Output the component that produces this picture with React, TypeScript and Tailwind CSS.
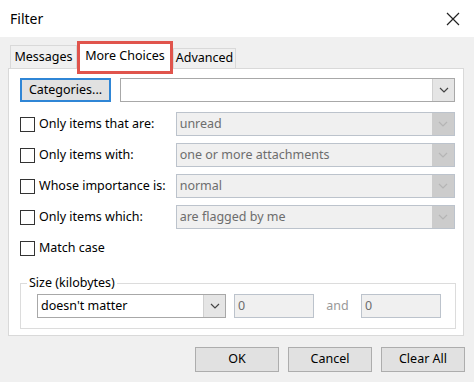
import React from 'react';

const font = { fontFamily: '"Noto Sans", "Open Sans", sans-serif' };

function Chevron({ light }: { light?: boolean }) {
  return (
    <svg width="10" height="6" viewBox="0 0 10 6" fill="none">
      <path d="M1 1l4 4 4-4" stroke={light ? '#b5b5b5' : '#444'} strokeWidth="1.2" />
    </svg>
  );
}

function Select({ value, disabled, className }: { value: string; disabled?: boolean; className: string }) {
  return (
    <div
      className={`flex h-[24px] items-stretch border ${
        disabled ? 'border-[#bcc3cc] bg-[#f0f0f0] text-[#6d6d6d]' : 'border-[#a8a8a8] bg-white text-black'
      } ${className}`}
    >
      <div className="flex flex-1 items-center overflow-hidden whitespace-nowrap pl-[3px]">{value}</div>
      <div
        className={`flex w-[22px] items-center justify-center ${
          disabled ? 'bg-[#cccccc]' : 'border-l border-[#d0d0d0] bg-[#e5e5e5]'
        }`}
      >
        <Chevron light={disabled} />
      </div>
    </div>
  );
}

function Checkbox() {
  return <div className="h-[15px] w-[15px] shrink-0 border border-[#333] bg-white" />;
}

const rows = [
  { label: 'Only items that are:', value: 'unread' },
  { label: 'Only items with:', value: 'one or more attachments' },
  { label: 'Whose importance is:', value: 'normal' },
  { label: 'Only items which:', value: 'are flagged by me' },
];

export default function App() {
  return (
    <div className="flex h-[382px] w-[474px] flex-col bg-[#f0f0f0] text-[12.5px] text-black" style={font}>
      <div className="flex h-[37px] shrink-0 items-center justify-between bg-white pl-[10px] pr-[14px]">
        <span className="text-[14px]">Filter</span>
        <svg width="14" height="14" viewBox="0 0 14 14">
          <path d="M1 1l12 12M13 1L1 13" stroke="#222" strokeWidth="1.2" />
        </svg>
      </div>

      <div className="flex h-[31px] items-end pl-[10px]">
        <div className="flex h-[23px] w-[67px] items-center justify-center border border-b-0 border-[#d9d9d9] bg-[#f0f0f0]">
          Messages
        </div>
        <div className="relative z-10 -mb-[6px] flex h-[33px] w-[96px] items-center justify-center border-[3px] border-[#e0544c] bg-white pb-[2px]">
          More Choices
        </div>
        <div className="flex h-[20px] w-[63px] items-center justify-center border border-b-0 border-[#d9d9d9] bg-[#f0f0f0]">
          Advanced
        </div>
      </div>

      <div className="mx-[8px] flex h-[268px] w-[456px] flex-col border border-[#d9d9d9] bg-white pl-[11px] pr-[8px] pt-[9px]">
        <div className="flex items-center gap-[9px]">
          <div className="flex h-[24px] w-[91px] items-center justify-center border-2 border-[#2f86d6] bg-[#e1e1e1]">
            Categories...
          </div>
          <Select value="" className="w-[335px]" />
        </div>

        <div className="mt-[10px] flex flex-col gap-[7px]">
          {rows.map((r) => (
            <div key={r.label} className="flex h-[24px] items-center">
              <Checkbox />
              <span className="ml-[4px] w-[137px] whitespace-nowrap">{r.label}</span>
              <Select value={r.value} disabled className="w-[280px]" />
            </div>
          ))}
          <div className="flex h-[24px] items-center">
            <Checkbox />
            <span className="ml-[4px]">Match case</span>
          </div>
        </div>

        <div className="relative mt-[23px] flex h-[46px] w-[436px] items-center border border-[#dcdcdc] pl-[16px]">
          <span className="absolute -top-[10px] left-[6px] bg-white px-[2px]">Size (kilobytes)</span>
          <Select value="doesn't matter" className="w-[189px]" />
          <div className="ml-[8px] flex h-[24px] w-[80px] items-center border border-[#bcc3cc] bg-[#f0f0f0] pl-[3px] text-[#6d6d6d]">
            0
          </div>
          <span className="w-[47px] text-center text-[#999]">and</span>
          <div className="flex h-[24px] w-[80px] items-center border border-[#bcc3cc] bg-[#f0f0f0] pl-[3px] text-[#6d6d6d]">
            0
          </div>
        </div>
      </div>

      <div className="mt-[11px] flex justify-end gap-[9px] pr-[9px]">
        {['OK', 'Cancel', 'Clear All'].map((b) => (
          <div key={b} className="flex h-[25px] w-[84px] items-center justify-center border border-[#adadad] bg-[#e1e1e1]">
            {b}
          </div>
        ))}
      </div>
    </div>
  );
}
